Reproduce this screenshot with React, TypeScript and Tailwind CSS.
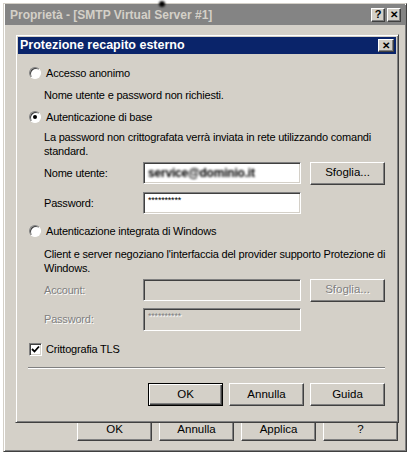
const sans = "font-['Liberation_Sans',Arial,sans-serif]";

const raised =
  "bg-[#d4d0c8] border border-t-white border-l-white border-r-[#404040] border-b-[#404040] shadow-[inset_-1px_-1px_0_#808080]";
const sunken =
  "border border-t-[#808080] border-l-[#808080] border-r-white border-b-white shadow-[inset_1px_1px_0_#404040,inset_-1px_-1px_0_#d4d0c8]";
const etched = "text-[#808080] [text-shadow:1px_1px_0_#ffffff]";

function Button({ label, primary, disabled }: { label: string; primary?: boolean; disabled?: boolean }) {
  const frame = primary
    ? "bg-[#d4d0c8] border border-black shadow-[inset_1px_1px_0_#ffffff,inset_-1px_-1px_0_#404040,inset_-2px_-2px_0_#808080]"
    : raised;
  return (
    <div className={`w-[75px] h-[23px] flex items-center justify-center text-[11.5px] tracking-normal ${frame} ${disabled ? etched : "text-black"}`}>
      {label}
    </div>
  );
}

function Radio({ checked }: { checked?: boolean }) {
  return (
    <span className="w-[12px] h-[12px] shrink-0 rounded-full bg-white border border-t-[#808080] border-l-[#808080] border-r-white border-b-white shadow-[inset_1px_1px_0_#404040] flex items-center justify-center">
      {checked && <span className="w-[4px] h-[4px] rounded-full bg-black" />}
    </span>
  );
}

function Checkbox() {
  return (
    <span className={`w-[13px] h-[13px] shrink-0 bg-white ${sunken} flex items-center justify-center`}>
      <svg width="9" height="9" viewBox="0 0 9 9">
        <path d="M1 4 L3.5 6.5 L8 1.5" fill="none" stroke="#000" strokeWidth="1.8" />
      </svg>
    </span>
  );
}

function Field({ disabled, children }: { disabled?: boolean; children?: React.ReactNode }) {
  return (
    <div className={`w-[158px] h-[22px] ${sunken} ${disabled ? "bg-[#d4d0c8]" : "bg-white"} px-[4px] flex items-center overflow-hidden`}>
      {children}
    </div>
  );
}

export default function App() {
  return (
    <div className={`${sans} relative w-[412px] h-[457px] bg-white overflow-hidden text-[11px] tracking-[-0.2px] text-black whitespace-nowrap`}>
      {/* cursor smudge */}
      <div className="absolute left-[159px] top-[1px] w-[6px] h-[6px] rounded-full bg-black blur-[1px] z-20" />

      {/* outer window */}
      <div className="absolute left-[3px] top-[3px] w-[404px] h-[449px] bg-[#d4d0c8] border border-t-[#d4d0c8] border-l-[#d4d0c8] border-r-[#404040] border-b-[#404040] shadow-[inset_1px_1px_0_#ffffff,inset_-1px_-1px_0_#808080] flex flex-col">
        <div className="h-[21px] mx-[1px] bg-[#848484] flex items-center justify-between pl-[5px] pr-[4px]">
          <span className="font-bold text-[12px] tracking-normal text-[#d4d0c8]">Proprietà - [SMTP Virtual Server #1]</span>
          <div className="flex gap-[2px]">
            <div className={`w-[14px] h-[14px] ${raised} flex items-center justify-center text-[11px] font-bold`}>?</div>
            <div className={`w-[14px] h-[14px] ${raised} flex items-center justify-center text-[10px] font-bold`}>{"\u2715"}</div>
          </div>
        </div>
        <div className="flex-1" />
        <div className="flex justify-end gap-[7px] pr-[8px] pb-[10px]">
          <Button label="OK" />
          <Button label="Annulla" />
          <Button label="Applica" />
          <Button label="?" />
        </div>
      </div>

      {/* dialog */}
      <div className="absolute left-[15px] top-[34px] w-[384px] h-[389px] bg-[#d4d0c8] border border-t-[#d4d0c8] border-l-[#d4d0c8] border-r-[#404040] border-b-[#404040] shadow-[inset_1px_1px_0_#ffffff,inset_-1px_-1px_0_#808080] p-[2px] flex flex-col z-10">
        <div className="h-[17px] bg-[#0a246a] flex items-center justify-between pl-[2px] pr-[2px]">
          <span className="font-bold text-[12.5px] tracking-normal text-white">Protezione recapito esterno</span>
          <div className={`w-[16px] h-[13px] ${raised} flex items-center justify-center text-[10px] font-bold`}>{"\u2715"}</div>
        </div>

        <div className="px-[11px] flex flex-col">
          <div className="mt-[12px] h-[14px] flex items-center gap-[5px]">
            <Radio />
            <span>Accesso anonimo</span>
          </div>
          <div className="mt-[8px] h-[14px] leading-[14px] pl-[15px]">Nome utente e password non richiesti.</div>

          <div className="mt-[8px] h-[14px] flex items-center gap-[5px]">
            <Radio checked />
            <span>Autenticazione di base</span>
          </div>
          <div className="mt-[6px] h-[28px] leading-[14px] pl-[15px]">
            La password non crittografata verrà inviata in rete utilizzando comandi
            <br />
            standard.
          </div>
          <div className="mt-[4px] h-[22px] flex items-center pl-[15px]">
            <span className="w-[99px]">Nome utente:</span>
            <Field>
              <span className="blur-[1.2px] font-bold text-[12px] text-black">service@dominio.it</span>
            </Field>
            <div className="ml-[9px]">
              <Button label="Sfoglia..." />
            </div>
          </div>
          <div className="mt-[8px] h-[22px] flex items-center pl-[15px]">
            <span className="w-[99px]">Password:</span>
            <Field>
              <span className="text-[9px] leading-none self-start mt-[3px]">**********</span>
            </Field>
          </div>

          <div className="mt-[10px] h-[14px] flex items-center gap-[5px]">
            <Radio />
            <span>Autenticazione integrata di Windows</span>
          </div>
          <div className="mt-[10px] h-[27px] leading-[13.5px] pl-[15px]">
            Client e server negoziano l'interfaccia del provider supporto Protezione di
            <br />
            Windows.
          </div>
          <div className="mt-[4px] h-[22px] flex items-center pl-[15px]">
            <span className={`w-[99px] ${etched}`}>Account:</span>
            <Field disabled />
            <div className="ml-[9px]">
              <Button label="Sfoglia..." disabled />
            </div>
          </div>
          <div className="mt-[7px] h-[23px] flex items-center pl-[15px]">
            <span className={`w-[99px] ${etched}`}>Password:</span>
            <div className={`w-[158px] h-[23px] ${sunken} bg-[#d4d0c8] px-[4px] flex`}>
              <span className={`text-[9px] leading-none mt-[3px] ${etched}`}>**********</span>
            </div>
          </div>

          <div className="mt-[11px] h-[14px] flex items-center gap-[4px]">
            <Checkbox />
            <span>Crittografia TLS</span>
          </div>

          <div className="mt-[11px] -ml-[1px] h-[2px] border-t border-t-[#808080] border-b border-b-white" />

          <div className="mt-[14px] flex justify-end gap-[6px]">
            <Button label="OK" primary />
            <Button label="Annulla" />
            <Button label="Guida" />
          </div>
        </div>
      </div>
    </div>
  );
}
